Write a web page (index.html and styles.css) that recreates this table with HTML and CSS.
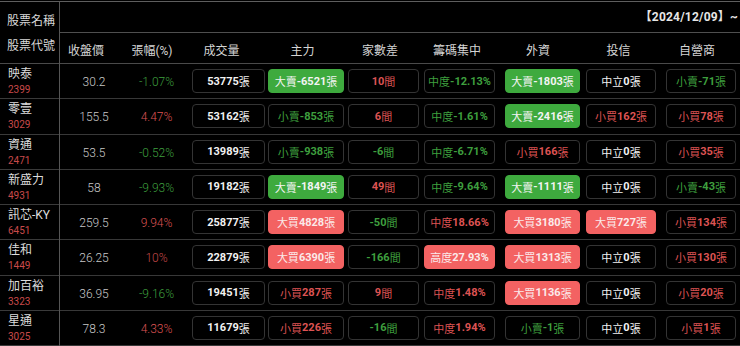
FILE: index.html
```html
<!DOCTYPE html>
<html lang="zh-Hant">
<head>
<meta charset="utf-8">
<title>籌碼排行</title>
<link rel="stylesheet" href="styles.css">
</head>
<body>
<div class="board">
  <aside class="names">
    <div class="names-head"><div>股票名稱</div><div>股票代號</div></div>
    <div class="name"><div class="n">映泰</div><div class="c">2399</div></div>
    <div class="name"><div class="n">零壹</div><div class="c">3029</div></div>
    <div class="name"><div class="n">資通</div><div class="c">2471</div></div>
    <div class="name"><div class="n">新盛力</div><div class="c">4931</div></div>
    <div class="name"><div class="n">訊芯-KY</div><div class="c">6451</div></div>
    <div class="name"><div class="n">佳和</div><div class="c">1449</div></div>
    <div class="name"><div class="n">加百裕</div><div class="c">3323</div></div>
    <div class="name"><div class="n">星通</div><div class="c">3025</div></div>
  </aside>
  <section class="data">
    <div class="head1"><span class="date">【2024/12/09】~</span></div>
    <div class="head2 grid">
      <div class="h h-price">收盤價</div>
      <div class="h">張幅(%)</div>
      <div class="h">成交量</div>
      <div class="h">主力</div>
      <div class="h">家數差</div>
      <div class="h">籌碼集中</div>
      <div class="h">外資</div>
      <div class="h">投信</div>
      <div class="h">自營商</div>
    </div>

    <div class="row grid">
      <div class="price">30.2</div><div class="chg g">-1.07%</div>
      <div class="cell"><span class="box w"><b>53775</b>張</span></div>
      <div class="cell"><span class="box gf">大賣<b>-6521</b>張</span></div>
      <div class="cell"><span class="box r"><b>10</b>間</span></div>
      <div class="cell"><span class="box g">中度<b>-12.13%</b></span></div>
      <div class="cell"><span class="box gf">大賣<b>-1803</b>張</span></div>
      <div class="cell"><span class="box w">中立<b>0</b>張</span></div>
      <div class="cell"><span class="box g">小賣<b>-71</b>張</span></div>
    </div>

    <div class="row grid">
      <div class="price">155.5</div><div class="chg r">4.47%</div>
      <div class="cell"><span class="box w"><b>53162</b>張</span></div>
      <div class="cell"><span class="box g">小賣<b>-853</b>張</span></div>
      <div class="cell"><span class="box r"><b>6</b>間</span></div>
      <div class="cell"><span class="box g">中度<b>-1.61%</b></span></div>
      <div class="cell"><span class="box gf">大賣<b>-2416</b>張</span></div>
      <div class="cell"><span class="box r">小買<b>162</b>張</span></div>
      <div class="cell"><span class="box r">小買<b>78</b>張</span></div>
    </div>

    <div class="row grid">
      <div class="price">53.5</div><div class="chg g">-0.52%</div>
      <div class="cell"><span class="box w"><b>13989</b>張</span></div>
      <div class="cell"><span class="box g">小賣<b>-938</b>張</span></div>
      <div class="cell"><span class="box g"><b>-6</b>間</span></div>
      <div class="cell"><span class="box g">中度<b>-6.71%</b></span></div>
      <div class="cell"><span class="box r">小買<b>166</b>張</span></div>
      <div class="cell"><span class="box w">中立<b>0</b>張</span></div>
      <div class="cell"><span class="box r">小買<b>35</b>張</span></div>
    </div>

    <div class="row grid">
      <div class="price">58</div><div class="chg g">-9.93%</div>
      <div class="cell"><span class="box w"><b>19182</b>張</span></div>
      <div class="cell"><span class="box gf">大賣<b>-1849</b>張</span></div>
      <div class="cell"><span class="box r"><b>49</b>間</span></div>
      <div class="cell"><span class="box g">中度<b>-9.64%</b></span></div>
      <div class="cell"><span class="box gf">大賣<b>-1111</b>張</span></div>
      <div class="cell"><span class="box w">中立<b>0</b>張</span></div>
      <div class="cell"><span class="box g">小賣<b>-43</b>張</span></div>
    </div>

    <div class="row grid">
      <div class="price">259.5</div><div class="chg r">9.94%</div>
      <div class="cell"><span class="box w"><b>25877</b>張</span></div>
      <div class="cell"><span class="box rf">大買<b>4828</b>張</span></div>
      <div class="cell"><span class="box g"><b>-50</b>間</span></div>
      <div class="cell"><span class="box r">中度<b>18.66%</b></span></div>
      <div class="cell"><span class="box rf">大買<b>3180</b>張</span></div>
      <div class="cell"><span class="box rf">大買<b>727</b>張</span></div>
      <div class="cell"><span class="box r">小買<b>134</b>張</span></div>
    </div>

    <div class="row grid">
      <div class="price">26.25</div><div class="chg r2">10%</div>
      <div class="cell"><span class="box w"><b>22879</b>張</span></div>
      <div class="cell"><span class="box rf">大買<b>6390</b>張</span></div>
      <div class="cell"><span class="box g"><b>-166</b>間</span></div>
      <div class="cell"><span class="box rf">高度<b>27.93%</b></span></div>
      <div class="cell"><span class="box rf">大買<b>1313</b>張</span></div>
      <div class="cell"><span class="box w">中立<b>0</b>張</span></div>
      <div class="cell"><span class="box r">小買<b>130</b>張</span></div>
    </div>

    <div class="row grid">
      <div class="price">36.95</div><div class="chg g">-9.16%</div>
      <div class="cell"><span class="box w"><b>19451</b>張</span></div>
      <div class="cell"><span class="box r">小買<b>287</b>張</span></div>
      <div class="cell"><span class="box r"><b>9</b>間</span></div>
      <div class="cell"><span class="box r">中度<b>1.48%</b></span></div>
      <div class="cell"><span class="box rf">大買<b>1136</b>張</span></div>
      <div class="cell"><span class="box w">中立<b>0</b>張</span></div>
      <div class="cell"><span class="box r">小買<b>20</b>張</span></div>
    </div>

    <div class="row grid">
      <div class="price">78.3</div><div class="chg r">4.33%</div>
      <div class="cell"><span class="box w"><b>11679</b>張</span></div>
      <div class="cell"><span class="box r">小買<b>226</b>張</span></div>
      <div class="cell"><span class="box g"><b>-16</b>間</span></div>
      <div class="cell"><span class="box r">中度<b>1.94%</b></span></div>
      <div class="cell"><span class="box g">小賣<b>-1</b>張</span></div>
      <div class="cell"><span class="box w">中立<b>0</b>張</span></div>
      <div class="cell"><span class="box r">小買<b>1</b>張</span></div>
    </div>
  </section>
</div>
</body>
</html>
```

FILE: styles.css
```css
* { box-sizing: border-box; }
html, body { margin: 0; padding: 0; background: #000; }
body {
  font-family: Roboto, "Noto Sans CJK TC", sans-serif;
  color: #ddd;
  width: 740px;
  height: 346px;
  overflow: hidden;
}
.board {
  margin-top: 1px;
  border-top: 1px solid #5e5e5e;
  display: flex;
}
.names {
  width: 60px;
  flex: none;
  border-right: 1px solid #555;
}
.names-head {
  height: 62px;
  border-bottom: 1px solid #4a4a4a;
  padding: 7px 0 0 7px;
  font-size: 12px;
  line-height: 25px;
  color: #d8d8d8;
}
.name {
  height: 35.25px;
  border-bottom: 1px solid #3a3a3a;
  padding: 2px 0 0 8px;
}
.name .n { font-size: 12px; line-height: 16px; color: #dcdcdc; white-space: nowrap; }
.name .c { font-size: 10px; line-height: 16px; color: #c84a4a; }

.data { flex: 1; }
.head1 {
  height: 31px;
  border-bottom: 1px solid #4f4f4f;
  display: flex;
  justify-content: flex-end;
  align-items: center;
  padding: 0 2px 3px 0;
}
.date { font-size: 12px; font-weight: 700; color: #e6e6e6; letter-spacing: 0.2px; }

.grid {
  display: grid;
  grid-template-columns: 68px 56px 82px 80px 75px 79px 83px 78px 79px;
}
.head2 {
  height: 31px;
  border-bottom: 1px solid #4a4a4a;
  align-items: center;
  padding-top: 3px;
}
.h {
  text-align: center;
  font-size: 12px;
  color: #d4d4d4;
  padding-right: 7px;
}
.h.h-price { padding-right: 16px; }
.h:nth-child(2) { padding-right: 8px; }

.row {
  height: 35.25px;
  border-bottom: 1px solid #383838;
  align-items: center;
}
.price {
  text-align: center;
  font-size: 12px;
  font-weight: 300;
  color: #c8c8c8;
  padding-top: 2px;
}
.chg {
  text-align: center;
  font-size: 12px;
  font-weight: 300;
  padding-top: 2px;
  padding-left: 1px;
}
.cell { display: flex; }
.box {
  display: flex;
  align-items: center;
  justify-content: center;
  height: 24px;
  border: 1px solid #343434;
  border-radius: 4px;
  font-size: 11px;
  white-space: nowrap;
}
.box b { font-weight: 700; }
.row .cell:nth-child(3) .box { margin-left: 8px; width: 73px; }
.row .cell:nth-child(4) .box { margin-left: 2px; width: 76px; }
.row .cell:nth-child(5) .box { margin-left: 2px; width: 71px; }
.row .cell:nth-child(6) .box { margin-left: 3px; width: 71px; }
.row .cell:nth-child(7) .box { margin-left: 5px; width: 75px; }
.row .cell:nth-child(8) .box { margin-left: 3px; width: 70px; }
.row .cell:nth-child(9) .box { margin-left: 5px; width: 70px; }

.g { color: #3e9f3e; }
.r { color: #dd5353; }
.r2 { color: #c44848; }
.w { color: #f2f2f2; }
.gf { background: #3eaa3e; border-color: #3eaa3e; color: #f4f4f4; }
.rf { background: #f36262; border-color: #f36262; color: #fbeaea; }
```
